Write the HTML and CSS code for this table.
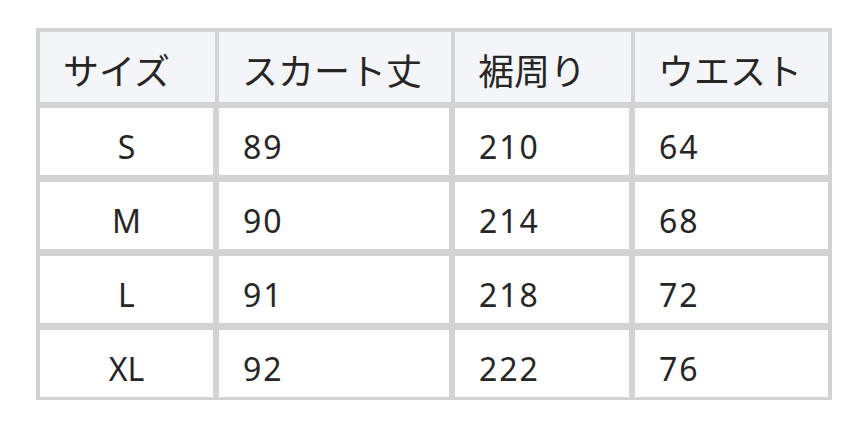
FILE: index.html
```html
<!DOCTYPE html>
<html lang="ja">
<head>
<meta charset="utf-8">
<link rel="stylesheet" href="styles.css">
</head>
<body>
<table class="size-table">
  <colgroup>
    <col class="c1"><col class="c2"><col class="c3"><col class="c4">
  </colgroup>
  <thead>
    <tr><th>サイズ</th><th>スカート丈</th><th>裾周り</th><th>ウエスト</th></tr>
  </thead>
  <tbody>
    <tr><td>S</td><td>89</td><td>210</td><td>64</td></tr>
    <tr><td>M</td><td>90</td><td>214</td><td>68</td></tr>
    <tr><td>L</td><td>91</td><td>218</td><td>72</td></tr>
    <tr><td>XL</td><td>92</td><td>222</td><td>76</td></tr>
  </tbody>
</table>
</body>
</html>
```

FILE: styles.css
```css
html, body {
  margin: 0;
  padding: 0;
  background: #ffffff;
}

body {
  padding: 28px 0 0 36px;
  font-family: "Noto Sans", "Noto Sans CJK JP", sans-serif;
  color: #262626;
}

.size-table {
  border-collapse: separate;
  border-spacing: 0;
  table-layout: fixed;
  width: 796px;
  border-style: solid;
  border-color: #d3d3d3;
  border-width: 4px 4px 3px 4px;
  font-size: 32px;
}

.c1 { width: 175px; }
.c2 { width: 236px; }
.c3 { width: 180px; }
.c4 { width: 197px; }

.size-table th,
.size-table td {
  border: 0 solid #d3d3d3;
  padding: 0 0 0 24px;
  text-align: left;
  font-weight: normal;
  line-height: 44px;
  white-space: nowrap;
}

.size-table th {
  background: #f4f5f9;
  height: 70px;
  box-sizing: border-box;
  padding-top: 18px;
  padding-bottom: 8px;
  padding-left: 23px;
  vertical-align: top;
  border-bottom-width: 6px;
  font-size: 36px;
}

.size-table th + th {
  border-left-width: 4px;
}

.size-table td {
  background: #ffffff;
  height: 67px;
  box-sizing: border-box;
  padding-top: 17px;
  padding-bottom: 6px;
  vertical-align: top;
  letter-spacing: 2px;
}

.size-table td + td {
  border-left-width: 4px;
}

.size-table td:not(:last-child) {
  border-right-width: 2px;
}

.size-table tbody tr + tr td {
  border-top-width: 7px;
  height: 74px;
}

.size-table td:first-child {
  text-align: center;
  padding-left: 0;
  letter-spacing: 0;
}
```
